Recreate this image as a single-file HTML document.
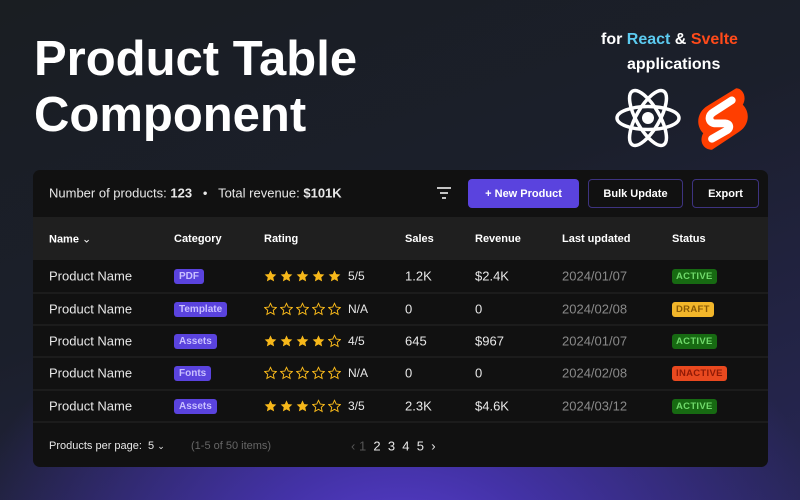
<!DOCTYPE html>
<html><head><meta charset="utf-8"><style>
*{margin:0;padding:0;box-sizing:border-box}
body{width:800px;height:500px;overflow:hidden;font-family:"Liberation Sans",sans-serif;color:#fff;position:relative;
background:radial-gradient(ellipse 440px 320px at 400px 570px,#5b3fd6 0%,#4332a6 35%,rgba(40,35,90,0) 100%),linear-gradient(160deg,#1a1e22 0%,#1b1f2b 45%,#272655 100%);}
.a{position:absolute;white-space:nowrap}
h1{position:absolute;left:34px;top:31px;font-size:49px;line-height:56px;font-weight:700;letter-spacing:0}
.card{position:absolute;left:33px;top:170px;width:735px;height:297px;background:#111;border-radius:7px;overflow:hidden}
.thead{position:absolute;left:0;top:47px;width:735px;height:43px;background:#1f1f1f}
.line{position:absolute;left:0;width:735px;height:2px;background:#1c1c1c}
.t{font-size:13px;color:#e8e8e8;transform:translateY(-50%)}
.h{font-size:11px;font-weight:700;color:#fff;transform:translateY(-50%)}
.badge{font-size:10px;height:15px;line-height:15px;font-weight:700;background:#5a43de;color:#c9c0ff;border-radius:3px;padding:0 5px;margin-top:-7px}
.st{font-size:9.5px;height:15px;line-height:15px;font-weight:700;border-radius:3px;padding:0 4px;margin-top:-7px;letter-spacing:.3px}
.act{background:#176a12;color:#6fd96a}.dr{background:#f2b62a;color:#8a5a05}.in{background:#e9491f;color:#8f1a06}
.btn{position:absolute;top:9px;height:29px;border-radius:4px;font-size:11px;font-weight:700;display:flex;align-items:center;justify-content:center}
.stars{transform:translateY(-50%);display:flex;gap:3px}
.dim{color:#8a8a8a}
</style></head><body>
<h1>Product Table<br>Component</h1>
<div class="a" style="left:601px;top:31px;font-size:16px;font-weight:700">for <span style="color:#5ccbf0">React</span> &amp; <span style="color:#ff4a1a">Svelte</span></div>
<div class="a" style="left:627px;top:56px;font-size:16px;font-weight:700">applications</div>
<svg class="a" style="left:614px;top:88px" width="68" height="60" viewBox="-34 -30 68 60" fill="none" stroke="#fff" stroke-width="3.5">
<ellipse rx="31" ry="11.5"/><ellipse rx="31" ry="11.5" transform="rotate(60)"/><ellipse rx="31" ry="11.5" transform="rotate(120)"/><circle r="6" fill="#fff" stroke="none"/></svg>
<svg class="a" style="left:694px;top:86px" width="58" height="66" viewBox="2 2 52 60">
<path d="M40 4 L14 20 C4 26 3 38 10 45 C6 52 10 60 18 60 L42 44 C52 38 53 26 46 19 C50 12 46 4 40 4Z" fill="#ff3e00"/>
<path d="M36 15 L19 26 C14 29 15 35 20 36 L30 36 C34 36 35 40 32 42 L18 50" fill="none" stroke="#fff" stroke-width="7" stroke-linecap="round" stroke-linejoin="round"/>
</svg>
<div class="card">
<div class="a t" style="left:16px;top:23px;font-size:13px">Number of products: <b>123</b> &nbsp;&nbsp;•&nbsp;&nbsp; Total revenue: <b>$101K</b></div>
<svg class="a" style="left:403px;top:16px" width="16" height="14"><path d="M1 2H15M4 7H12M6 12H10" stroke="#fff" stroke-width="1.6"/></svg>
<div class="btn" style="left:435px;width:111px;background:#5a43de">+ New Product</div>
<div class="btn" style="left:555px;width:95px;border:1px solid #3d3380">Bulk Update</div>
<div class="btn" style="left:659px;width:67px;border:1px solid #3d3380">Export</div>
<div class="thead"></div>
<div class="line" style="top:122px"></div><div class="line" style="top:154px"></div><div class="line" style="top:186px"></div><div class="line" style="top:219px"></div><div class="line" style="top:251px"></div>
<div id="c"></div>
<div class="a t" style="left:16px;top:276px;font-size:11px">Products per page: &nbsp;5 <span style="font-size:9px">⌄</span></div>
<div class="a t dim" style="left:158px;top:276px;font-size:11px;color:#666">(1-5 of 50 items)</div>
<div class="a t" style="left:318px;top:276px;font-size:13px"><span style="color:#555">‹ 1</span>&nbsp; 2 &nbsp;3 &nbsp;4 &nbsp;5 &nbsp;›</div>
</div>
<script>
const star=(f)=>`<svg width="13" height="13" viewBox="0 0 24 24"><path d="M12 1.5l3.2 7 7.6.8-5.7 5.2 1.6 7.5L12 18.2 5.3 22l1.6-7.5L1.2 9.3l7.6-.8z" fill="${f?'#f7b81a':'none'}" stroke="#f7b81a" stroke-width="${f?0:1.8}"/></svg>`;
const rows=[["PDF",5,"5/5","1.2K","$2.4K","2024/01/07","ACTIVE","act"],["Template",0,"N/A","0","0","2024/02/08","DRAFT","dr"],["Assets",4,"4/5","645","$967","2024/01/07","ACTIVE","act"],["Fonts",0,"N/A","0","0","2024/02/08","INACTIVE","in"],["Assets",3,"3/5","2.3K","$4.6K","2024/03/12","ACTIVE","act"]];
let h=`<div class="a h" style="left:16px;top:69px">Name <span style="font-weight:400">⌄</span></div><div class="a h" style="left:141px;top:69px">Category</div><div class="a h" style="left:231px;top:69px">Rating</div><div class="a h" style="left:372px;top:69px">Sales</div><div class="a h" style="left:442px;top:69px">Revenue</div><div class="a h" style="left:529px;top:69px">Last updated</div><div class="a h" style="left:639px;top:69px">Status</div>`;
const ys=[106,139,171,203,236];
rows.forEach((r,i)=>{const y=ys[i];let s='';for(let k=0;k<5;k++)s+=star(k<r[1]);
h+=`<div class="a t" style="left:16px;top:${y}px">Product Name</div><div class="a badge" style="left:141px;top:${y}px">${r[0]}</div><div class="a stars" style="left:231px;top:${y}px">${s}</div><div class="a t" style="left:315px;top:${y}px;font-size:12px">${r[2]}</div><div class="a t" style="left:372px;top:${y}px">${r[3]}</div><div class="a t" style="left:442px;top:${y}px">${r[4]}</div><div class="a t dim" style="left:529px;top:${y}px">${r[5]}</div><div class="a st ${r[7]}" style="left:639px;top:${y}px">${r[6]}</div>`});
document.getElementById('c').innerHTML=h;
</script>
</body></html>
